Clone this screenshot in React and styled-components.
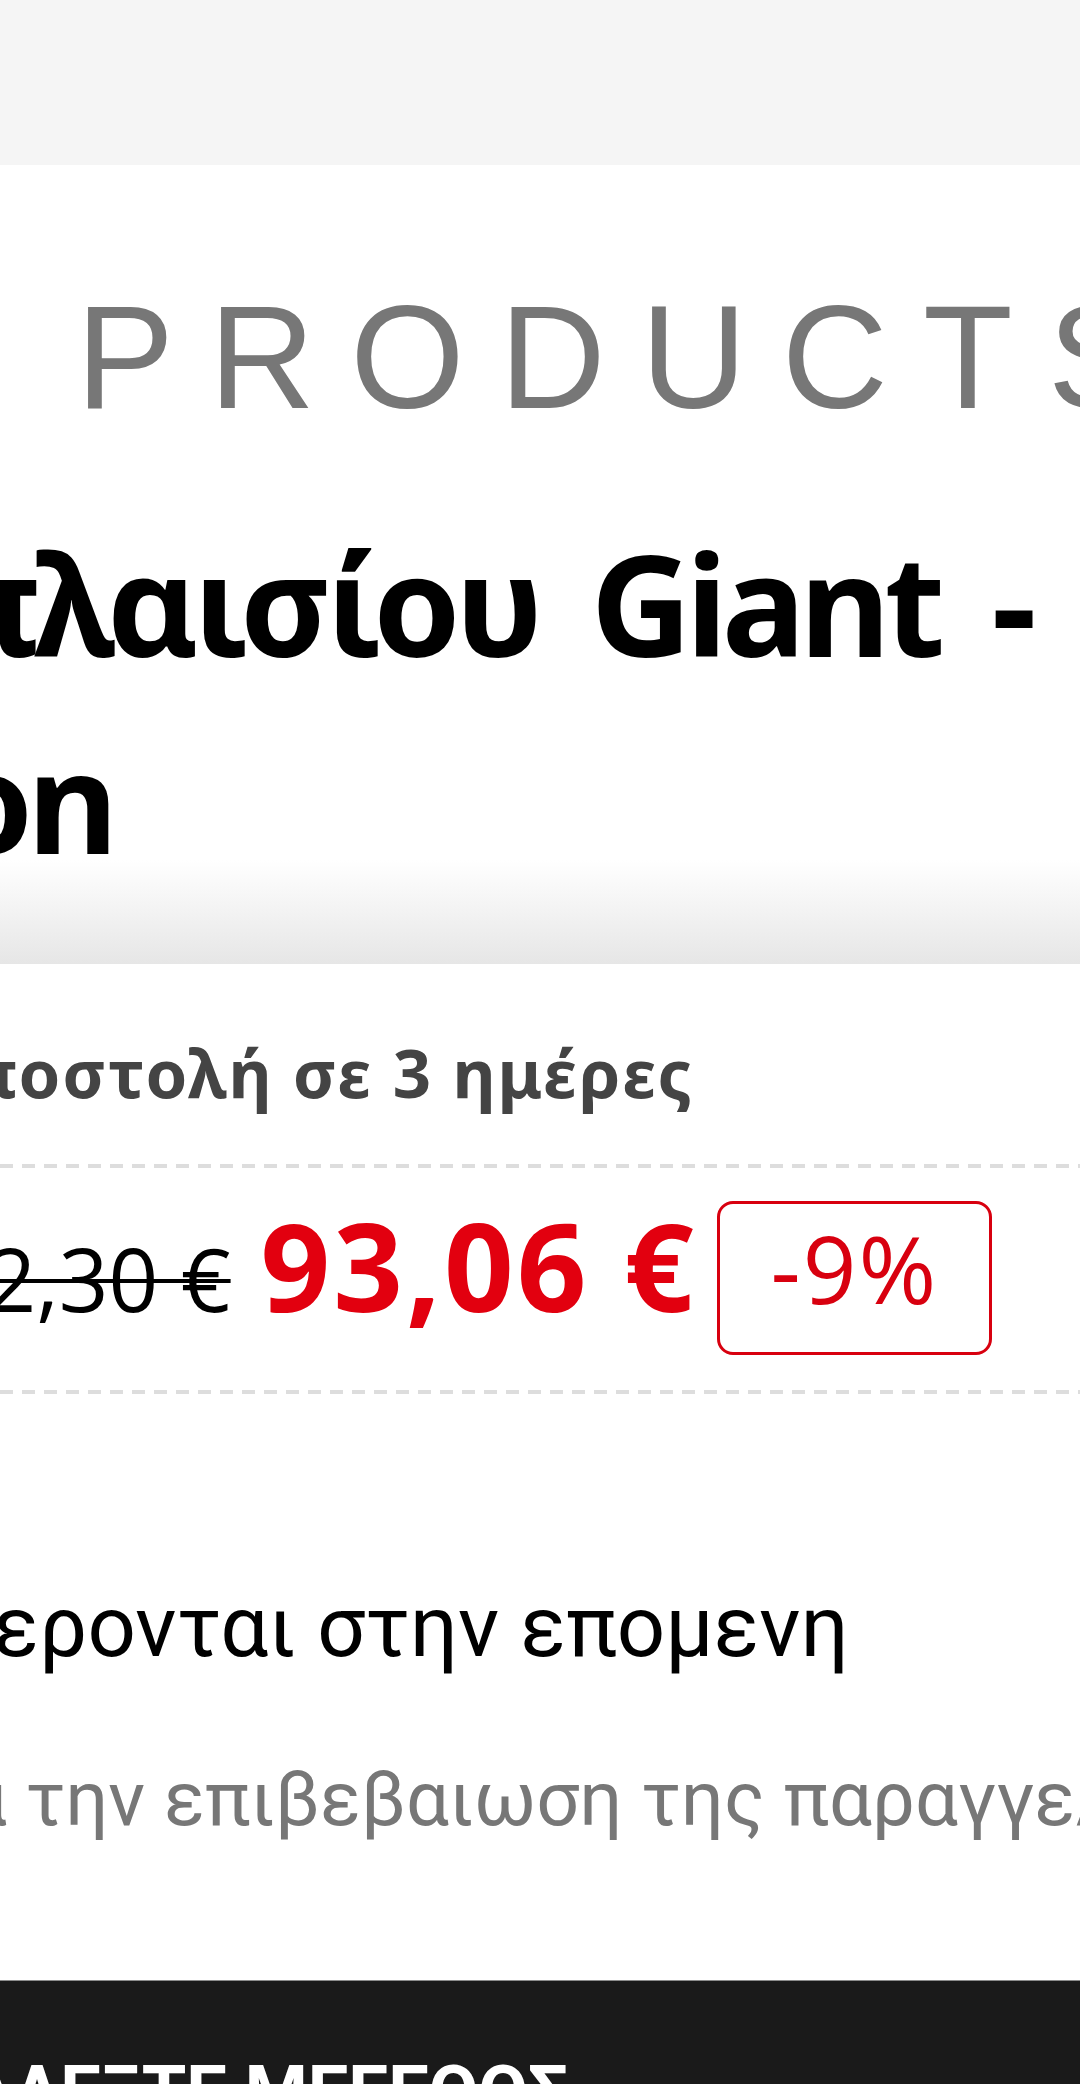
import React from 'react';
import styled, { createGlobalStyle } from 'styled-components';

const GlobalStyle = createGlobalStyle`
  html, body {
    margin: 0;
    padding: 0;
    background: #fff;
  }
  body {
    font-family: 'Roboto', 'Noto Sans', sans-serif;
  }
`;

const Page = styled.div`
  width: 1080px;
  height: 2084px;
  overflow: hidden;
  display: flex;
  flex-direction: column;
  background: #fff;
`;

const TopBand = styled.div`
  flex-shrink: 0;
  height: 165px;
  background: #f5f5f5;
`;

const Brand = styled.div`
  margin-top: 119px;
  padding-left: 76px;
  font-family: 'Liberation Sans', Arial, sans-serif;
  font-size: 147px;
  line-height: 147px;
  letter-spacing: 35px;
  color: #777;
  white-space: nowrap;
`;

// title area fades to grey at the bottom, like a sticky header edge
const TitleBlock = styled.header`
  padding: 73px 0 66px;
  background: linear-gradient(to bottom, #fff 0, #fff calc(100% - 104px), #e6e6e6 100%);
`;

const TitleLine = styled.div`
  margin-left: ${p => p.$shift}px;
  font-family: 'Noto Sans', 'Open Sans', sans-serif;
  font-weight: 700;
  font-size: 140px;
  line-height: 197px;
  letter-spacing: -6px;
  word-spacing: 22px;
  color: #000;
  white-space: nowrap;
`;

const Shipping = styled.div`
  margin-top: 68px;
  margin-left: ${p => p.$shift}px;
  font-family: 'Noto Sans', sans-serif;
  font-weight: 700;
  font-size: 67px;
  line-height: 80px;
  letter-spacing: 2px;
  color: #444;
  white-space: nowrap;
`;

const Dashed = styled.div`
  flex-shrink: 0;
  height: 4px;
  margin-top: ${p => p.$top}px;
  background: repeating-linear-gradient(to right, #ddd 0 13px, transparent 13px 22px);
`;

const PriceRow = styled.div`
  display: flex;
  align-items: center;
  height: 154px;
  margin-top: 33px;
  margin-left: ${p => p.$shift}px;
  white-space: nowrap;
`;

const OldPrice = styled.span`
  font-family: 'Open Sans', sans-serif;
  font-size: 87px;
  line-height: 100px;
  color: #000;
  text-decoration: line-through;
  text-decoration-thickness: 4px;
`;

const NowPrice = styled.span`
  margin-left: 30px;
  margin-bottom: 26px;
  font-family: 'Open Sans', sans-serif;
  font-weight: 700;
  font-size: 122px;
  line-height: 122px;
  letter-spacing: 3px;
  color: #e2000f;
`;

const Badge = styled.span`
  box-sizing: border-box;
  display: flex;
  align-items: center;
  justify-content: center;
  flex-shrink: 0;
  width: 275px;
  height: 154px;
  margin-left: 20px;
  padding-bottom: 20px;
  border: 3px solid #d8000f;
  border-radius: 16px;
  font-family: 'Open Sans', sans-serif;
  font-size: 94px;
  line-height: 100px;
  letter-spacing: 2px;
  color: #d8000f;
`;

const Note = styled.div`
  margin-top: ${p => p.$top}px;
  margin-left: ${p => p.$shift}px;
  font-family: 'Roboto', sans-serif;
  font-size: ${p => p.$size}px;
  line-height: ${p => p.$lh}px;
  color: ${p => p.$color};
  white-space: nowrap;
`;

const BottomBar = styled.footer`
  box-sizing: border-box;
  flex-shrink: 0;
  height: 104px;
  margin-top: auto;
  padding-top: 76px;
  border-top: 1px solid #8c8c8c;
  background: #1a1a1a;
  overflow: hidden;
`;

const SizeButton = styled.div`
  margin-left: ${p => p.$shift}px;
  font-family: 'Roboto', sans-serif;
  font-weight: 700;
  font-size: 72px;
  line-height: 72px;
  color: #fff;
  white-space: nowrap;
`;

export default function App() {
  return (
    <>
      <GlobalStyle />
      <Page>
        <TopBand />
        <Brand>PRODUCTS</Brand>
        <TitleBlock>
          <TitleLine $shift={-64}>πλαισίου Giant -</TitleLine>
          <TitleLine $shift={-355}>Carbon</TitleLine>
        </TitleBlock>
        <Shipping $shift={-81}>Αποστολή σε 3 ημέρες</Shipping>
        <Dashed $top={52} />
        <PriceRow $shift={-113}>
          <OldPrice>102,30 €</OldPrice>
          <NowPrice>93,06 €</NowPrice>
          <Badge>-9%</Badge>
        </PriceRow>
        <Dashed $top={35} />
        <Note $top={178} $shift={-252} $size={85} $lh={110} $color="#000">
          μεταφερονται στην επομενη
        </Note>
        <Note $top={72} $shift={-159} $size={76} $lh={90} $color="#777">
          μετα την επιβεβαιωση της παραγγελιας
        </Note>
        <BottomBar>
          <SizeButton $shift={-109}>ΔΙΑΛΕΞΤΕ ΜΕΓΕΘΟΣ</SizeButton>
        </BottomBar>
      </Page>
    </>
  );
}
